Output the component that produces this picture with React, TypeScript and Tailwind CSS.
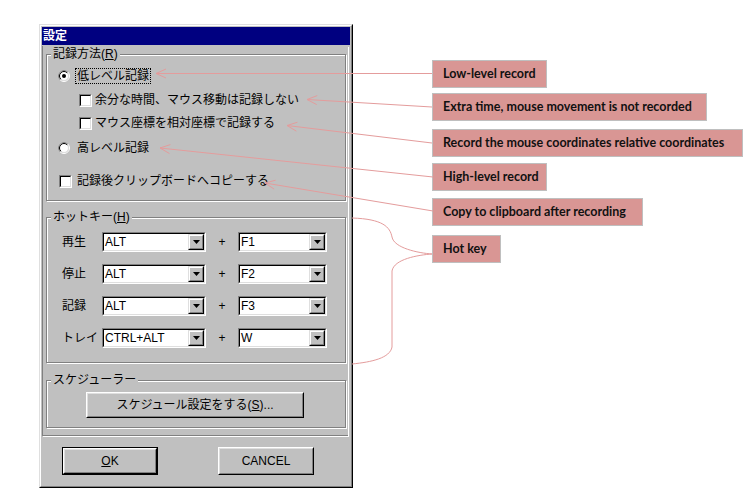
import React from "react";

const Radio = ({ checked }: { checked?: boolean }) => (
  <svg width="12" height="12" viewBox="0 0 12 12" className="shrink-0">
    <circle cx="6" cy="6" r="5.5" fill="none" stroke="#ffffff" />
    <path d="M2.1 9.9 A5.5 5.5 0 0 1 9.9 2.1" fill="none" stroke="#808080" />
    <circle cx="6" cy="6" r="4.5" fill="#ffffff" stroke="#dfdfdf" />
    <path d="M2.8 9.2 A4.5 4.5 0 0 1 9.2 2.8" fill="none" stroke="#000000" />
    {checked && <circle cx="6" cy="6" r="2" fill="#000000" />}
  </svg>
);

const Check = () => (
  <div className="w-[13px] h-[13px] shrink-0 border border-t-[#808080] border-l-[#808080] border-r-white border-b-white">
    <div className="w-full h-full bg-white border border-t-black border-l-black border-r-[#dfdfdf] border-b-[#dfdfdf]" />
  </div>
);

const Combo = ({ value, w }: { value: string; w: string }) => (
  <div className={`${w} h-[20px] shrink-0 border border-t-[#808080] border-l-[#808080] border-r-white border-b-white`}>
    <div className="w-full h-full bg-white border border-t-black border-l-black border-r-[#dfdfdf] border-b-[#dfdfdf] flex items-center">
      <span className="pl-px text-[12px] leading-[14px] text-black">{value}</span>
      <div className="ml-auto w-[16px] h-[16px] bg-[#c0c0c0] border border-t-[#dfdfdf] border-l-[#dfdfdf] border-r-black border-b-black">
        <div className="w-full h-full border border-t-white border-l-white border-r-[#808080] border-b-[#808080] flex items-center justify-center">
          <svg width="7" height="4" viewBox="0 0 7 4">
            <polygon points="0,0 7,0 3.5,4" fill="#000" />
          </svg>
        </div>
      </div>
    </div>
  </div>
);

const Btn = ({ children, cls }: { children: React.ReactNode; cls: string }) => (
  <div className={`${cls} shrink-0 border border-t-white border-l-white border-r-black border-b-black`}>
    <div className="w-full h-full border border-t-[#dfdfdf] border-l-[#dfdfdf] border-r-[#808080] border-b-[#808080] flex items-center justify-center text-[12px] leading-[14px] text-black">
      {children}
    </div>
  </div>
);

const Group = ({ label, h, mt, children }: { label: React.ReactNode; h: string; mt: string; children: React.ReactNode }) => (
  <fieldset className={`${h} ${mt} w-[300px] m-0 p-0 min-w-0 border border-[#808080] shadow-[inset_1px_1px_0_#fff,1px_1px_0_#fff]`}>
    <legend className="ml-[4px] px-[2px] bg-[#c0c0c0] text-[12px] leading-[14px] text-black">{label}</legend>
    {children}
  </fieldset>
);

const HotRow = ({ label, a, b, mt }: { label: string; a: string; b: string; mt: string }) => (
  <div className={`${mt} h-[20px] flex items-center`}>
    <span className="w-[40px] text-[12px] leading-[14px]">{label}</span>
    <Combo value={a} w="w-[104px]" />
    <span className="w-[32px] text-center text-[12px] leading-[14px]">+</span>
    <Combo value={b} w="w-[89px]" />
  </div>
);

const Note = ({ text, w, mt }: { text: string; w: string; mt: string }) => (
  <div className={`${w} ${mt} h-[28px] bg-[#d99694] border border-[#bfbfbf] flex items-center pl-[10px] text-[12.5px] font-bold text-[#111] font-['Lato',sans-serif] whitespace-nowrap`}>
    {text}
  </div>
);

const Arrow = ({ x1, y1, x2, y2 }: { x1: number; y1: number; x2: number; y2: number }) => {
  const dx = x2 - x1;
  const dy = y2 - y1;
  const L = Math.hypot(dx, dy);
  const ux = dx / L;
  const uy = dy / L;
  const len = 10;
  const w = 4.5;
  const ax = x1 + ux * len;
  const ay = y1 + uy * len;
  const px = -uy;
  const py = ux;
  return (
    <g>
      <line x1={x1} y1={y1} x2={x2} y2={y2} />
      <polyline points={`${ax + px * w},${ay + py * w} ${x1},${y1} ${ax - px * w},${ay - py * w}`} fill="none" />
    </g>
  );
};

export default function App() {
  return (
    <div className="relative w-[753px] h-[501px] bg-white flex items-start overflow-hidden font-['Liberation_Sans','Noto_Sans_CJK_JP',sans-serif] text-black">
      {/* Dialog */}
      <div className="ml-[39px] mt-[24px] w-[314px] h-[464px] shrink-0 bg-[#c0c0c0] border border-t-[#dfdfdf] border-l-[#dfdfdf] border-r-black border-b-black">
        <div className="h-full border border-t-white border-l-white border-r-[#808080] border-b-[#808080] p-px flex flex-col">
          <div className="h-[18px] bg-[#000080] text-white font-bold text-[12px] leading-[18px] pl-px">設定</div>
          <div className="mt-px w-[306px] h-[390px] shrink-0 border-l border-b border-[#808080] shadow-[1px_1px_0_#fff] pl-[3px] pt-px flex flex-col">
            <Group label={<>記録方法(<u>R</u>)</>} h="h-[154px]" mt="mt-0">
              <div className="pl-[11px] flex flex-col text-[12px] leading-[14px]">
                <div className="mt-[7px] h-[16px] flex items-center">
                  <Radio checked />
                  <span className="ml-[5px] border border-dotted border-black px-px">低レベル記録</span>
                </div>
                <div className="mt-[8px] h-[16px] flex items-center">
                  <div className="ml-[21px]"><Check /></div>
                  <span className="ml-[3px]">余分な時間、マウス移動は記録しない</span>
                </div>
                <div className="mt-[7px] h-[16px] flex items-center">
                  <div className="ml-[21px]"><Check /></div>
                  <span className="ml-[3px]">マウス座標を相対座標で記録する</span>
                </div>
                <div className="mt-[9px] h-[16px] flex items-center">
                  <Radio />
                  <span className="ml-[7px]">高レベル記録</span>
                </div>
                <div className="mt-[17px] h-[16px] flex items-center">
                  <div className="ml-px"><Check /></div>
                  <span className="ml-[5px]">記録後クリップボードへコピーする</span>
                </div>
              </div>
            </Group>
            <Group label={<>ホットキー(<u>H</u>)</>} h="h-[153px]" mt="mt-[9px]">
              <div className="pl-[15px] flex flex-col">
                <HotRow label="再生" a="ALT" b="F1" mt="mt-[8px]" />
                <HotRow label="停止" a="ALT" b="F2" mt="mt-[12px]" />
                <HotRow label="記録" a="ALT" b="F3" mt="mt-[12px]" />
                <HotRow label="トレイ" a="CTRL+ALT" b="W" mt="mt-[12px]" />
              </div>
            </Group>
            <Group label="スケジューラー" h="h-[55px]" mt="mt-[10px]">
              <div className="pl-[39px] pt-[5px]">
                <Btn cls="w-[218px] h-[26px]">
                  <span>スケジュール設定をする(<u>S</u>)...</span>
                </Btn>
              </div>
            </Group>
          </div>
          <div className="mt-[11px] flex">
            <div className="ml-[20px] w-[96px] h-[28px] border border-black">
              <Btn cls="w-full h-full"><span><u>O</u>K</span></Btn>
            </div>
            <Btn cls="ml-[60px] w-[96px] h-[28px]">CANCEL</Btn>
          </div>
        </div>
      </div>

      {/* Annotations */}
      <div className="ml-[79px] pt-[60px] flex flex-col items-start">
        <Note text="Low-level record" w="w-[115px]" mt="mt-0" />
        <Note text="Extra time, mouse movement is not recorded" w="w-[275px]" mt="mt-[5px]" />
        <Note text="Record the mouse coordinates relative coordinates" w="w-[311px]" mt="mt-[8px]" />
        <Note text="High-level  record" w="w-[115px]" mt="mt-[6px]" />
        <Note text="Copy to clipboard  after recording" w="w-[211px]" mt="mt-[7px]" />
        <Note text="Hot key" w="w-[69px]" mt="mt-[9px]" />
      </div>

      <svg className="absolute inset-0 pointer-events-none" width="753" height="501" viewBox="0 0 753 501" stroke="#e49c9c" strokeWidth="1" fill="none">
        <Arrow x1={156} y1={73.5} x2={432} y2={73.5} />
        <Arrow x1={307} y1={99.5} x2={432} y2={107} />
        <Arrow x1={287} y1={125.5} x2={432} y2={143} />
        <Arrow x1={160} y1={148} x2={433} y2={177} />
        <Arrow x1={265} y1={183} x2={433} y2={211} />
        <path d="M352 218 C 383 219 390 227 392 237 C 394 248 418 253 432 254 C 418 255 394 259 392 271 L 392 347 C 390 358 372 362 352 364" />
      </svg>
    </div>
  );
}
